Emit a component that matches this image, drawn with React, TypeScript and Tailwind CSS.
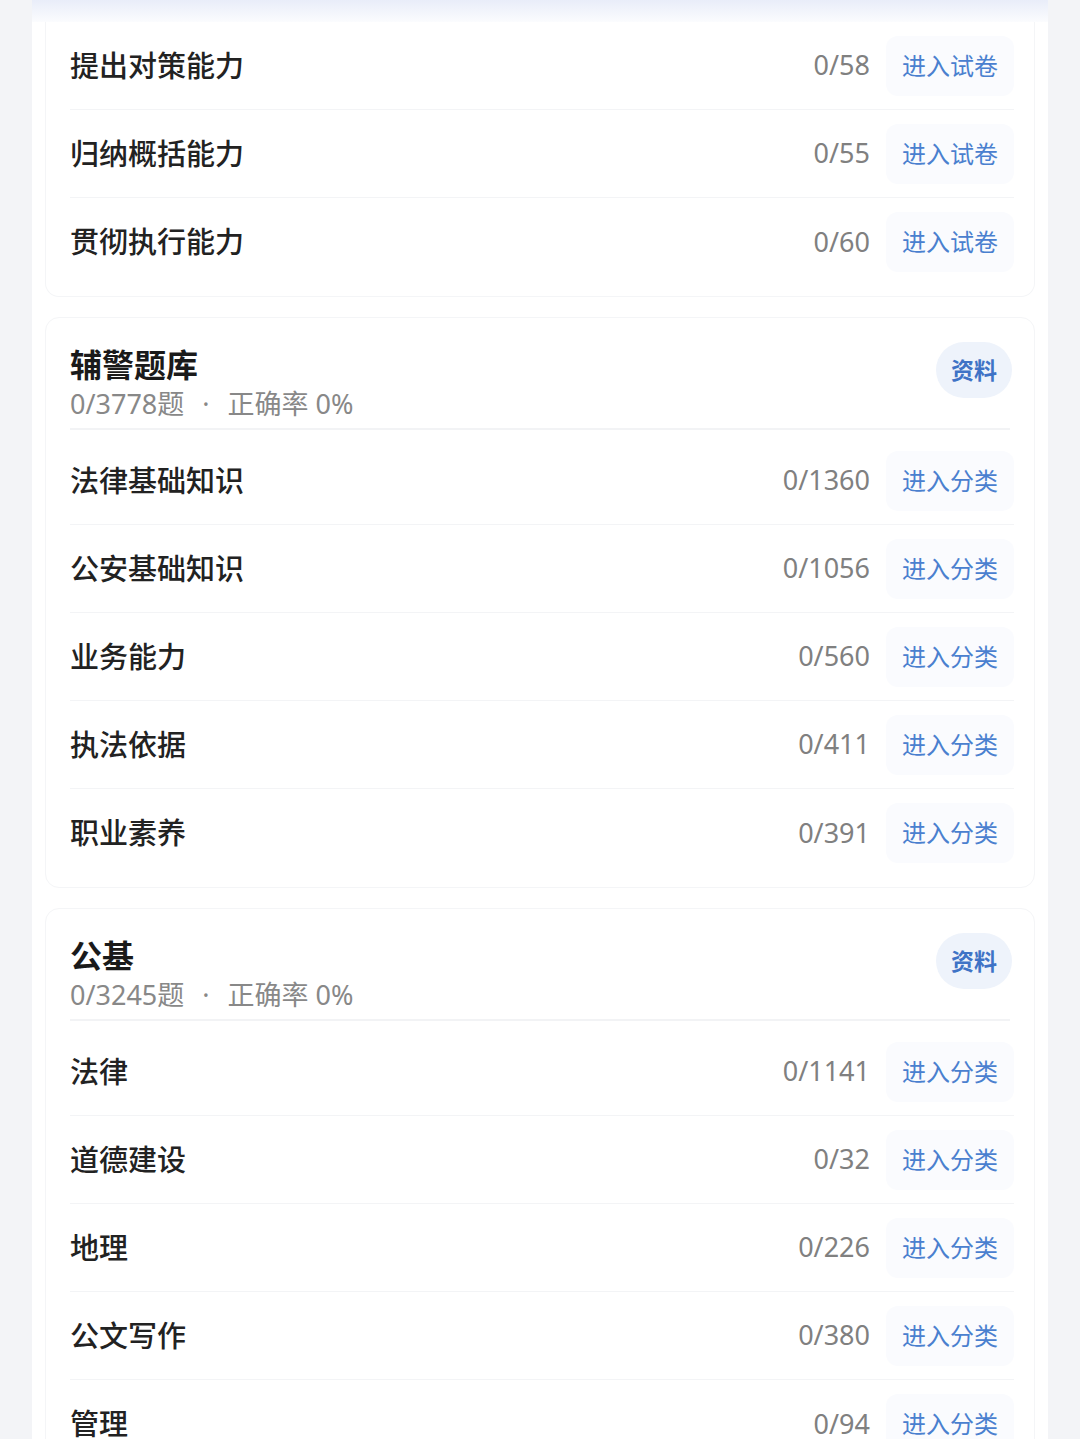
import React from "react";

type Row = { name: string; count: string; action: string };

const card1: Row[] = [
  { name: "提出对策能力", count: "0/58", action: "进入试卷" },
  { name: "归纳概括能力", count: "0/55", action: "进入试卷" },
  { name: "贯彻执行能力", count: "0/60", action: "进入试卷" },
];

const card2: Row[] = [
  { name: "法律基础知识", count: "0/1360", action: "进入分类" },
  { name: "公安基础知识", count: "0/1056", action: "进入分类" },
  { name: "业务能力", count: "0/560", action: "进入分类" },
  { name: "执法依据", count: "0/411", action: "进入分类" },
  { name: "职业素养", count: "0/391", action: "进入分类" },
];

const card3: Row[] = [
  { name: "法律", count: "0/1141", action: "进入分类" },
  { name: "道德建设", count: "0/32", action: "进入分类" },
  { name: "地理", count: "0/226", action: "进入分类" },
  { name: "公文写作", count: "0/380", action: "进入分类" },
  { name: "管理", count: "0/94", action: "进入分类" },
];

function ItemRow({ row, last }: { row: Row; last: boolean }) {
  return (
    <div
      className={
        "flex h-[88px] items-center " + (last ? "" : "border-b border-[#f3f4f6]")
      }
    >
      <div className="flex-1 text-[29px] font-medium text-[#222222]">{row.name}</div>
      <div className="text-[27px] text-[#808080]">{row.count}</div>
      <div className="ml-[16px] flex h-[60px] items-center rounded-[12px] bg-[#fafbfe] px-[16px] text-[24px] text-[#4a80cf]">
        {row.action}
      </div>
    </div>
  );
}

function Card({
  title,
  total,
  rows,
}: {
  title: string;
  total: string;
  rows: Row[];
}) {
  return (
    <div className="rounded-[14px] border border-[#f4f5f7] bg-white pb-[10px] pl-[24px] pr-[20px] pt-[27px]">
      <div className="mr-[4px] flex items-start justify-between border-b-2 border-[#f2f3f5] pb-[5px]">
        <div>
          <div className="text-[32px] font-bold leading-[40px] text-[#1a1a1a]">{title}</div>
          <div className="text-[27px] leading-[38px] text-[#888888]">
            {total}
            <span className="mx-[18px]">·</span>
            正确率 0%
          </div>
        </div>
        <div className="mr-[-2px] mt-[-3px] flex h-[56px] w-[76px] items-center justify-center rounded-full bg-[#eef3fb] text-[23px] font-bold text-[#3f73c6]">
          资料
        </div>
      </div>
      <div className="pt-[7px]">
        {rows.map((r, i) => (
          <ItemRow key={r.name} row={r} last={i === rows.length - 1} />
        ))}
      </div>
    </div>
  );
}

export default function App() {
  return (
    <div
      className="min-h-[1439px] w-[1080px] overflow-hidden bg-[#f3f4f7]"
      style={{ fontFamily: '"Noto Sans", "Noto Sans CJK SC", sans-serif' }}
    >
      <div className="mx-[32px] h-[1439px] bg-white">
        <div className="h-[22px] bg-gradient-to-b from-[#e9edf9] to-[#fbfcfe]" />
        <div className="mx-[13px]">
          <div className="rounded-b-[14px] border border-t-0 border-[#f4f5f7] bg-white pb-[10px] pl-[24px] pr-[20px]">
            {card1.map((r, i) => (
              <ItemRow key={r.name} row={r} last={i === card1.length - 1} />
            ))}
          </div>
          <div className="mt-[20px]">
            <Card title="辅警题库" total="0/3778题" rows={card2} />
          </div>
          <div className="mt-[20px]">
            <Card title="公基" total="0/3245题" rows={card3} />
          </div>
        </div>
      </div>
    </div>
  );
}
